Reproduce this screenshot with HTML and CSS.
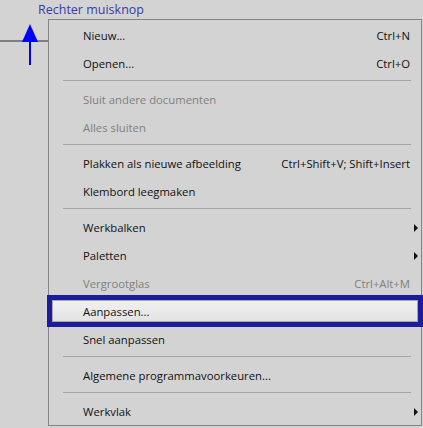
FILE: index.html
```html
<!DOCTYPE html>
<html>
<head>
<meta charset="utf-8">
<link rel="stylesheet" href="styles.css">
</head>
<body>
<div class="caption">Rechter muisknop</div>
<div class="stage">
  <div class="gutter">
    <svg class="pointer" width="48" height="50" viewBox="0 0 48 50">
      <rect x="0" y="21" width="48" height="2" fill="#7f7f7f"/>
      <rect x="29" y="14" width="2" height="32" fill="#0000ff"/>
      <polygon points="30,5 22,23 38,23" fill="#0000ff"/>
    </svg>
  </div>
  <div class="menu">
    <div class="item"><span class="label">Nieuw...</span><span class="key">Ctrl+N</span></div>
    <div class="item"><span class="label">Openen...</span><span class="key">Ctrl+O</span></div>
    <div class="sep"></div>
    <div class="item disabled"><span class="label">Sluit andere documenten</span></div>
    <div class="item disabled"><span class="label">Alles sluiten</span></div>
    <div class="sep"></div>
    <div class="item"><span class="label">Plakken als nieuwe afbeelding</span><span class="key">Ctrl+Shift+V; Shift+Insert</span></div>
    <div class="item"><span class="label">Klembord leegmaken</span></div>
    <div class="sep"></div>
    <div class="item sub"><span class="label">Werkbalken</span></div>
    <div class="item sub"><span class="label">Paletten</span></div>
    <div class="item disabled"><span class="label">Vergrootglas</span><span class="key">Ctrl+Alt+M</span></div>
    <div class="item active"><span class="label">Aanpassen...</span></div>
    <div class="item"><span class="label">Snel aanpassen</span></div>
    <div class="sep"></div>
    <div class="item"><span class="label">Algemene programmavoorkeuren...</span></div>
    <div class="sep"></div>
    <div class="item sub"><span class="label">Werkvlak</span></div>
  </div>
</div>
</body>
</html>
```
FILE: styles.css
```css
html, body {
  margin: 0;
  padding: 0;
  background: #d3d3d3;
  overflow: hidden;
}
body {
  width: 423px;
  height: 428px;
  font-family: "Open Sans", "Noto Sans", sans-serif;
}
.caption {
  height: 19px;
  line-height: 20px;
  padding-left: 38px;
  font-size: 12.5px;
  color: #3a3aa8;
}
.stage {
  display: flex;
  align-items: flex-start;
}
.gutter {
  width: 48px;
  flex: none;
}
.pointer {
  display: block;
}
.menu {
  width: 374px;
  flex: none;
  box-sizing: border-box;
  border: 1px solid #858585;
  background: #d3d3d3;
  padding: 1px 0 0 0;
  height: 407px;
}
.item {
  position: relative;
  display: flex;
  align-items: center;
  height: 28px;
  padding: 0 11px 0 34px;
  font-size: 11.3px;
  color: #111;
}
.item .label {
  flex: 1;
  white-space: nowrap;
}
.item .key {
  white-space: nowrap;
}
.item.disabled {
  color: #808080;
}
.item.sub::after {
  content: "";
  position: absolute;
  right: 3px;
  top: 11px;
  border-left: 4px solid #111;
  border-top: 4px solid transparent;
  border-bottom: 4px solid transparent;
}
.item.active {
  background: linear-gradient(#f3f3f3, #e0e0e0);
  box-shadow: inset 0 0 0 3px #1c1c9c, inset 0 0 0 4px #a8a8a8;
  outline: 2px solid #1c1c9c;
}
.sep {
  height: 8px;
  box-sizing: border-box;
  padding: 3px 10px 0 14px;
}
.sep::before {
  content: "";
  display: block;
  height: 1px;
  background: #a6a6a6;
}
```
